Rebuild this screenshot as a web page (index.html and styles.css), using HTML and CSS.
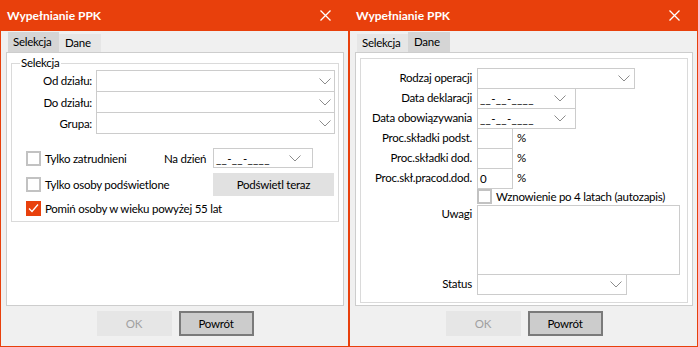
FILE: index.html
```html
<!DOCTYPE html>
<html lang="pl">
<head>
    <meta charset="UTF-8">
    <title>Wypełnianie PPK</title>
    <link rel="stylesheet" href="styles.css">
</head>
<body>
    <!-- okno 1: zakładka Selekcja -->
    <div class="dialog">
        <div class="titlebar">
            <span class="title">Wypełnianie PPK</span>
            <svg class="close" width="11" height="11" viewBox="0 0 11 11"><path d="M0.5 0.5L10.5 10.5M10.5 0.5L0.5 10.5" stroke="#fff" stroke-width="1.3"/></svg>
        </div>
        <div class="content">
            <div class="tabs">
                <div class="tab tab-sel active">Selekcja</div>
                <div class="tab tab-dane">Dane</div>
            </div>
            <div class="panel">
                <fieldset class="group">
                    <legend>Selekcja</legend>
                    <div class="combos">
                        <label>Od działu:</label>
                        <div class="combo"><svg class="chev" width="12" height="7" viewBox="0 0 12 7"><polyline points="0.5,0.5 6,6 11.5,0.5" fill="none" stroke="#8c8c8c"/></svg></div>
                        <label>Do działu:</label>
                        <div class="combo"><svg class="chev" width="12" height="7" viewBox="0 0 12 7"><polyline points="0.5,0.5 6,6 11.5,0.5" fill="none" stroke="#8c8c8c"/></svg></div>
                        <label>Grupa:</label>
                        <div class="combo"><svg class="chev" width="12" height="7" viewBox="0 0 12 7"><polyline points="0.5,0.5 6,6 11.5,0.5" fill="none" stroke="#8c8c8c"/></svg></div>
                    </div>
                    <div class="row row-a">
                        <div class="check-item">
                            <span class="checkbox"></span>
                            <span>Tylko zatrudnieni</span>
                        </div>
                        <span class="na-dzien">Na dzień</span>
                        <div class="date date-left">
                            <span class="mask">__-__-____</span>
                            <svg class="chev" width="12" height="7" viewBox="0 0 12 7"><polyline points="0.5,0.5 6,6 11.5,0.5" fill="none" stroke="#8c8c8c"/></svg>
                        </div>
                    </div>
                    <div class="row row-b">
                        <div class="check-item">
                            <span class="checkbox"></span>
                            <span>Tylko osoby podświetlone</span>
                        </div>
                        <button class="flat-btn">Podświetl teraz</button>
                    </div>
                    <div class="row row-c">
                        <div class="check-item">
                            <span class="checkbox checked"><svg width="13" height="13" viewBox="0 0 13 13"><polyline points="2,6.5 5,9.5 11,2.5" fill="none" stroke="#fff" stroke-width="1.3"/></svg></span>
                            <span>Pomiń osoby w wieku powyżej 55 lat</span>
                        </div>
                    </div>
                </fieldset>
            </div>
            <div class="buttons">
                <button class="btn" disabled>OK</button>
                <button class="btn btn-focus">Powrót</button>
            </div>
        </div>
    </div>

    <!-- okno 2: zakładka Dane -->
    <div class="dialog">
        <div class="titlebar">
            <span class="title">Wypełnianie PPK</span>
            <svg class="close" width="11" height="11" viewBox="0 0 11 11"><path d="M0.5 0.5L10.5 10.5M10.5 0.5L0.5 10.5" stroke="#fff" stroke-width="1.3"/></svg>
        </div>
        <div class="content">
            <div class="tabs">
                <div class="tab tab-sel">Selekcja</div>
                <div class="tab tab-dane active">Dane</div>
            </div>
            <div class="panel">
                <div class="box">
                    <div class="form">
                        <label>Rodzaj operacji</label>
                        <div class="field combo w-rodzaj"><svg class="chev" width="12" height="7" viewBox="0 0 12 7"><polyline points="0.5,0.5 6,6 11.5,0.5" fill="none" stroke="#8c8c8c"/></svg></div>

                        <label>Data deklaracji</label>
                        <div class="field date w-date">
                            <span class="mask">__-__-____</span>
                            <svg class="chev" width="12" height="7" viewBox="0 0 12 7"><polyline points="0.5,0.5 6,6 11.5,0.5" fill="none" stroke="#8c8c8c"/></svg>
                        </div>

                        <label>Data obowiązywania</label>
                        <div class="field date w-date">
                            <span class="mask">__-__-____</span>
                            <svg class="chev" width="12" height="7" viewBox="0 0 12 7"><polyline points="0.5,0.5 6,6 11.5,0.5" fill="none" stroke="#8c8c8c"/></svg>
                        </div>

                        <label>Proc.składki podst.</label>
                        <div class="pct"><div class="field w-pct"></div><span>%</span></div>

                        <label>Proc.składki dod.</label>
                        <div class="pct"><div class="field w-pct"></div><span>%</span></div>

                        <label>Proc.skł.pracod.dod.</label>
                        <div class="pct"><div class="field w-pct">0</div><span>%</span></div>

                        <div class="check-row">
                            <span class="checkbox"></span>
                            <span>Wznowienie po 4 latach (autozapis)</span>
                        </div>

                        <label class="top">Uwagi</label>
                        <div class="field memo"></div>

                        <label>Status</label>
                        <div class="field combo w-status"><svg class="chev" width="12" height="7" viewBox="0 0 12 7"><polyline points="0.5,0.5 6,6 11.5,0.5" fill="none" stroke="#8c8c8c"/></svg></div>
                    </div>
                </div>
            </div>
            <div class="buttons">
                <button class="btn" disabled>OK</button>
                <button class="btn btn-focus">Powrót</button>
            </div>
        </div>
    </div>
</body>
</html>
```

FILE: styles.css
```css
body {
    margin: 0;
    padding: 0;
    display: flex;
    font-family: 'Lato', 'Noto Sans', sans-serif;
    font-size: 11.5px;
    letter-spacing: -0.25px;
    color: #000;
    background: #fff;
    white-space: nowrap;
}

.dialog {
    width: 349px;
    height: 347px;
    box-sizing: border-box;
    border: 1px solid #e8400c;
    border-top: none;
    background: #f0f0f0;
    display: flex;
    flex-direction: column;
}

.titlebar {
    height: 31px;
    flex: none;
    background: #e8400c;
    display: flex;
    align-items: center;
    justify-content: space-between;
    padding: 0 17px 0 6px;
}

.title {
    color: #fff;
    font-weight: bold;
    font-size: 12px;
    letter-spacing: 0;
}

.content {
    flex: 1;
    padding: 1px 4px 0 5px;
    display: flex;
    flex-direction: column;
}

/* zakladki */
.tabs {
    display: flex;
    align-items: flex-end;
    height: 20px;
    padding-left: 2px;
}

.tab {
    height: 18px;
    line-height: 18px;
    padding-left: 5px;
    box-sizing: border-box;
    background: #e6e6e6;
}

.tab.active {
    height: 20px;
    line-height: 20px;
    background: #d5d5d5;
}

.tab-sel {
    width: 51px;
}

.tab-dane {
    width: 42px;
    padding-left: 6px;
}

.panel {
    height: 254px;
    box-sizing: border-box;
    border: 1px solid #cdcdcd;
    background: #fff;
}

/* grupa Selekcja */
.group {
    margin: 3px 4px 0 4px;
    padding: 0 3px 0 0;
    height: 166px;
    box-sizing: border-box;
    border: 1px solid #dadada;
}

.group legend {
    margin-left: 8px;
    padding: 0 1px;
    line-height: 14px;
}

.combos {
    display: grid;
    grid-template-columns: 84px 1fr;
}

.combos label {
    text-align: right;
    padding-right: 4px;
    line-height: 21px;
}

.combo {
    height: 22px;
    box-sizing: border-box;
    border: 1px solid #cccccc;
    background: #fff;
    display: flex;
    align-items: center;
    justify-content: flex-end;
    padding-right: 3px;
    margin-bottom: -1px;
}

.combos .combo {
    margin-bottom: 0;
}

.combos .combo + label + .combo {
    margin-top: -1px;
}

.chev {
    display: block;
    flex: none;
}

.row {
    display: flex;
    align-items: center;
    padding-left: 14px;
}

.row-a {
    margin-top: 14px;
    height: 20px;
}

.row-b {
    margin-top: 5px;
    height: 23px;
}

.row-c {
    margin-top: 5px;
    height: 15px;
}

.check-item {
    display: flex;
    align-items: center;
    gap: 4px;
}

.row-b .check-item {
    width: 187px;
}

.row-a .check-item {
    width: 138px;
}

.na-dzien {
    width: 49px;
}

.checkbox {
    width: 15px;
    height: 15px;
    box-sizing: border-box;
    border: 2px solid #c2c2c2;
    background: #fff;
    flex: none;
    display: flex;
    align-items: center;
    justify-content: center;
}

.checkbox.checked {
    border: none;
    background: #e8400c;
}

.date {
    height: 20px;
    box-sizing: border-box;
    border: 1px solid #cccccc;
    background: #fff;
    display: flex;
    align-items: center;
    justify-content: space-between;
    padding: 0 11px 0 2px;
}

.date-left {
    width: 100px;
}

.mask {
    letter-spacing: 0.3px;
}

.flat-btn {
    width: 121px;
    height: 23px;
    border: none;
    background: #e1e1e1;
    font-family: inherit;
    font-size: 11.5px;
    letter-spacing: -0.25px;
    color: #000;
    padding: 0;
}

/* zakladka Dane */
.box {
    margin: 5px 4px 0 4px;
    height: 245px;
    box-sizing: border-box;
    border: 1px solid #dadada;
    padding-top: 9px;
}

.form {
    display: grid;
    grid-template-columns: 116px 1fr;
    align-items: start;
}

.form label {
    text-align: right;
    padding-right: 5px;
    line-height: 20px;
}

.form label.top {
    line-height: 16px;
    padding-top: 1px;
}

.field {
    height: 21px;
    margin-bottom: -1px;
    box-sizing: border-box;
    border: 1px solid #cccccc;
    background: #fff;
}

.w-rodzaj {
    width: 158px;
    padding-right: 4px;
}

.w-date {
    width: 99px;
    padding-right: 9px;
}

.w-status {
    width: 150px;
    padding-right: 4px;
}

.pct {
    display: flex;
    align-items: flex-start;
    gap: 4px;
    line-height: 20px;
}

.w-pct {
    width: 36px;
    padding-left: 2px;
    line-height: 19px;
}

.check-row {
    grid-column: 2;
    display: flex;
    align-items: center;
    gap: 4px;
    height: 17px;
}

.memo {
    width: 203px;
    height: 70px;
}

/* przyciski */
.buttons {
    display: flex;
    justify-content: center;
    gap: 7px;
    margin-top: 5px;
}

.btn {
    width: 75px;
    height: 25px;
    box-sizing: border-box;
    border: 1px solid #e6e6e6;
    background: #e6e6e6;
    font-family: inherit;
    font-size: 11.5px;
    letter-spacing: -0.25px;
    color: #000;
    padding: 0;
}

.btn:disabled {
    color: #a0a0a0;
}

.btn-focus {
    border: 2px solid #7a7a7a;
    background: #cccccc;
}
```
